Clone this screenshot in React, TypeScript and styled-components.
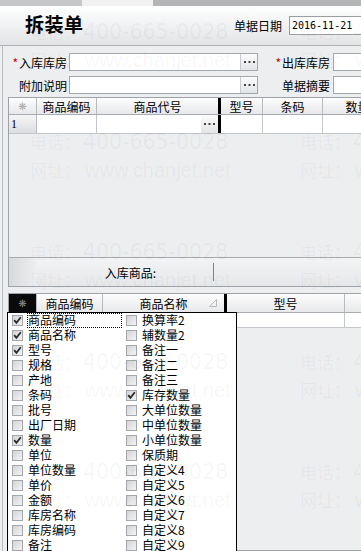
import React from 'react';
import styled, { createGlobalStyle } from 'styled-components';

const Global = createGlobalStyle`
  html, body { margin: 0; padding: 0; background: #eceef0; }
  body {
    font-family: "Noto Sans CJK SC", "Noto Sans", sans-serif;
    font-size: 12px;
    color: #000;
    overflow: hidden;
  }
  * { box-sizing: border-box; }
`;

const Page = styled.div`
  position: relative;
  width: 361px;
  height: 551px;
  overflow: hidden;
  background: #eceef0;
  display: flex;
  flex-direction: column;
`;

const TabStrip = styled.div`
  display: flex;
  height: 6px;
  flex-shrink: 0;
`;

const TabSeg = styled.div<{ $w?: number; $c: string }>`
  width: ${(p) => (p.$w ? `${p.$w}px` : 'auto')};
  flex: ${(p) => (p.$w ? 'none' : '1')};
  background: ${(p) => p.$c};
`;

const Header = styled.header`
  height: 40px;
  flex-shrink: 0;
  border-bottom: 1px solid #aeb1b5;
  background: linear-gradient(#ffffff, #e2e4e6);
  display: flex;
  align-items: center;
  padding-left: 25px;
`;

const Title = styled.h1`
  margin: -4px 0 0 0;
  flex: 1;
  font-size: 19px;
  font-weight: 700;
  letter-spacing: 0.5px;
  line-height: 1;
`;

const DateLabel = styled.span`
  font-size: 12px;
  margin-right: 7px;
  white-space: nowrap;
`;

const DateBox = styled.div`
  width: 72px;
  height: 19px;
  flex-shrink: 0;
  margin-top: -1px;
  background: #fff;
  border: 1px solid #9a9ea3;
  border-right: none;
  font-family: "DejaVu Sans Mono", monospace;
  font-size: 10px;
  line-height: 17px;
  padding-left: 2px;
  white-space: nowrap;
`;

const Main = styled.div`
  flex: 1;
  margin-left: 2px;
  border-left: 1px solid #b9bcc0;
  display: flex;
  flex-direction: column;
  min-height: 0;
`;

const Fields = styled.div`
  display: flex;
  flex-direction: column;
  gap: 5px;
  padding-top: 7px;
`;

const FieldRow = styled.div`
  display: flex;
  height: 18px;
`;

const Label = styled.label<{ $w: number; $pr: number }>`
  width: ${(p) => p.$w}px;
  flex-shrink: 0;
  display: flex;
  align-items: center;
  justify-content: flex-end;
  padding-right: ${(p) => p.$pr}px;
  font-size: 12px;
  white-space: nowrap;
`;

const Req = styled.span`
  color: #d40000;
  margin-right: 1px;
`;

const Combo = styled.div<{ $w: number }>`
  width: ${(p) => p.$w}px;
  flex-shrink: 0;
  display: flex;
  background: #fff;
  border: 1px solid #a3a8ae;
`;

const ComboText = styled.div`
  flex: 1;
`;

const DotsBtn = styled.div<{ $border?: boolean }>`
  width: 17px;
  flex-shrink: 0;
  display: flex;
  align-items: center;
  justify-content: center;
  background: linear-gradient(#fbfbfb, #e3e4e6);
  border-left: ${(p) => (p.$border ? '1px solid #c9ccd0' : 'none')};
`;

const Dots = () => (
  <svg width="11" height="2" viewBox="0 0 11 2">
    <rect x="0" y="0" width="2" height="2" fill="#444" />
    <rect x="4.5" y="0" width="2" height="2" fill="#444" />
    <rect x="9" y="0" width="2" height="2" fill="#444" />
  </svg>
);

const Grid = styled.div<{ $h?: number; $mt: number }>`
  margin-left: 5px;
  margin-top: ${(p) => p.$mt}px;
  ${(p) => (p.$h ? `height: ${p.$h}px;` : 'flex: 1;')}
  flex-shrink: 0;
  border: 1px solid #9da2a8;
  border-right: none;
  display: flex;
  flex-direction: column;
  background: #eceef0;
  overflow: hidden;
`;

const HeadRow = styled.div<{ $h: number }>`
  display: flex;
  height: ${(p) => p.$h}px;
  flex-shrink: 0;
  border-bottom: 1px solid #a9adb2;
`;

const HCell = styled.div<{ $w: number; $frozen?: boolean; $dark?: boolean }>`
  width: ${(p) => p.$w}px;
  flex-shrink: 0;
  display: flex;
  align-items: center;
  justify-content: center;
  position: relative;
  font-size: 12px;
  white-space: nowrap;
  background: ${(p) => (p.$dark ? '#0a0a0a' : 'linear-gradient(#fdfdfd, #e7e8ea)')};
  border-right: ${(p) => (p.$frozen ? '3px solid #000' : '1px solid #b8bcc1')};
`;

const Star = styled.span<{ $c: string }>`
  font-family: "DejaVu Sans", sans-serif;
  font-size: 10px;
  color: ${(p) => p.$c};
`;

const SortMark = styled.svg`
  position: absolute;
  right: 7px;
  top: 50%;
  margin-top: -4px;
`;

const DataRow = styled.div<{ $h: number }>`
  display: flex;
  height: ${(p) => p.$h}px;
  flex-shrink: 0;
  border-bottom: 1px solid #c3c7cc;
`;

const DCell = styled.div<{ $w: number; $frozen?: boolean }>`
  width: ${(p) => p.$w}px;
  flex-shrink: 0;
  display: flex;
  justify-content: flex-end;
  background: #fff;
  border-right: ${(p) => (p.$frozen ? '3px solid #000' : '1px solid #c3c7cc')};
`;

const RowHead = styled.div<{ $w: number }>`
  width: ${(p) => p.$w}px;
  flex-shrink: 0;
  background: linear-gradient(#f6f6f6, #dcdde0);
  border-right: 1px solid #b8bcc1;
  font-family: "Liberation Serif", serif;
  font-size: 12px;
  line-height: 18px;
  padding-left: 2px;
`;

const GridBody = styled.div`
  flex: 1;
`;

const Footer = styled.div`
  height: 29px;
  flex-shrink: 0;
  display: flex;
  align-items: center;
  border-top: 1px solid #a7abb0;
  background: linear-gradient(#f3f4f5, #e6e7e9);
`;

const FootHead = styled.div`
  width: 28px;
  align-self: stretch;
  flex-shrink: 0;
  background: linear-gradient(90deg, #d8d9db, #eeeff0);
`;

const FootLabel = styled.div`
  width: 177px;
  height: 18px;
  flex-shrink: 0;
  display: flex;
  align-items: center;
  justify-content: flex-end;
  padding-right: 57px;
  border-right: 1px solid #808080;
  font-size: 12px;
  white-space: nowrap;
`;

const Popup = styled.div`
  position: absolute;
  left: 7px;
  top: 312px;
  width: 230px;
  height: 250px;
  background: #fff;
  border: 1px solid #000;
  display: grid;
  grid-template-columns: 114px 1fr;
  grid-auto-flow: column;
  grid-template-rows: repeat(16, 15px);
  z-index: 5;
`;

const Item = styled.div`
  display: flex;
  align-items: center;
  padding-left: 4px;
  height: 15px;
`;

const Box = styled.span`
  width: 11px;
  height: 11px;
  flex-shrink: 0;
  border: 1px solid #a3a6aa;
  background: linear-gradient(135deg, #d3d4d6, #f3f3f4);
  display: flex;
  align-items: center;
  justify-content: center;
`;

const ItemText = styled.span<{ $focus?: boolean }>`
  flex: 1;
  height: 15px;
  margin-left: 4px;
  padding-left: 1px;
  font-size: 12px;
  line-height: 14px;
  white-space: nowrap;
  outline: ${(p) => (p.$focus ? '1px dotted #000' : 'none')};
  outline-offset: -1px;
`;

const Check = () => (
  <svg width="9" height="9" viewBox="0 0 9 9">
    <path d="M1.2 4.2 L3.4 6.8 L7.8 1.2" fill="none" stroke="#2a2a2a" strokeWidth="1.8" />
  </svg>
);

const Watermark = styled.div`
  position: absolute;
  inset: 0;
  pointer-events: none;
  z-index: 10;
  display: grid;
  grid-template-columns: 270px 270px;
  grid-auto-rows: 110px;
  padding: 18px 0 0 30px;
  color: rgba(0, 0, 0, 0.045);
`;

const WMBlock = styled.div`
  display: flex;
  flex-direction: column;
`;

const WMLine = styled.div`
  height: 28px;
  line-height: 28px;
  white-space: nowrap;
  display: flex;
  align-items: center;
`;

const WMCjk = styled.span`
  font-family: "Noto Sans CJK SC", sans-serif;
  font-size: 17px;
`;

const WMNum = styled.span`
  font-family: "DejaVu Sans", sans-serif;
  font-size: 20.5px;
  margin-left: 2px;
`;

const WMUrl = styled.span`
  font-family: "Liberation Sans", sans-serif;
  font-size: 20px;
  margin-left: 4px;
`;

const leftItems: [string, boolean][] = [
  ['商品编码', true], ['商品名称', true], ['型号', true], ['规格', false],
  ['产地', false], ['条码', false], ['批号', false], ['出厂日期', false],
  ['数量', true], ['单位', false], ['单位数量', false], ['单价', false],
  ['金额', false], ['库房名称', false], ['库房编码', false], ['备注', false],
];
const rightItems: [string, boolean][] = [
  ['换算率2', false], ['辅数量2', false], ['备注一', false], ['备注二', false],
  ['备注三', false], ['库存数量', true], ['大单位数量', false], ['中单位数量', false],
  ['小单位数量', false], ['保质期', false], ['自定义4', false], ['自定义5', false],
  ['自定义6', false], ['自定义7', false], ['自定义8', false], ['自定义9', false],
];

export default function App() {
  const blocks = Array.from({ length: 10 });
  return (
    <>
      <Global />
      <Page>
        <TabStrip>
          <TabSeg $w={82} $c="#c6c7c8" />
          <TabSeg $w={71} $c="#f1f1f1" />
          <TabSeg $c="#b4b5b7" />
        </TabStrip>
        <Header>
          <Title>拆装单</Title>
          <DateLabel>单据日期</DateLabel>
          <DateBox>2016-11-21</DateBox>
        </Header>
        <Main>
          <Fields>
            <FieldRow>
              <Label $w={66} $pr={2}><Req>*</Req>入库库房</Label>
              <Combo $w={189}>
                <ComboText />
                <DotsBtn $border><Dots /></DotsBtn>
              </Combo>
              <Label $w={75} $pr={3}><Req>*</Req>出库库房</Label>
              <Combo $w={60}><ComboText /></Combo>
            </FieldRow>
            <FieldRow>
              <Label $w={66} $pr={2}>附加说明</Label>
              <Combo $w={189}>
                <ComboText />
                <DotsBtn $border><Dots /></DotsBtn>
              </Combo>
              <Label $w={75} $pr={3}>单据摘要</Label>
              <Combo $w={60}><ComboText /></Combo>
            </FieldRow>
          </Fields>

          <Grid $h={190} $mt={3}>
            <HeadRow $h={17}>
              <HCell $w={28}><Star $c="#a8a8a8">❋</Star></HCell>
              <HCell $w={60}>商品编码</HCell>
              <HCell $w={124} $frozen>商品代号</HCell>
              <HCell $w={42}>型号</HCell>
              <HCell $w={60}>条码</HCell>
              <HCell $w={70}>数量</HCell>
            </HeadRow>
            <DataRow $h={19}>
              <RowHead $w={28}>1</RowHead>
              <DCell $w={60} />
              <DCell $w={124} $frozen>
                <DotsBtn><Dots /></DotsBtn>
              </DCell>
              <DCell $w={42} />
              <DCell $w={60} />
              <DCell $w={70} />
            </DataRow>
            <GridBody />
            <Footer>
              <FootHead />
              <FootLabel>入库商品:</FootLabel>
            </Footer>
          </Grid>

          <Grid $mt={6}>
            <HeadRow $h={19}>
              <HCell $w={28} $dark><Star $c="#8a8a8a">❋</Star></HCell>
              <HCell $w={66}>商品编码</HCell>
              <HCell $w={124} $frozen>
                商品名称
                <SortMark width="8" height="8" viewBox="0 0 8 8">
                  <path d="M0.5 7.5 L7.5 7.5 L7.5 0.5 Z" fill="none" stroke="#b9b9b9" strokeWidth="1" />
                </SortMark>
              </HCell>
              <HCell $w={118}>型号</HCell>
              <HCell $w={60} />
            </HeadRow>
            <DataRow $h={15}>
              <DCell $w={28} />
              <DCell $w={66} />
              <DCell $w={124} $frozen />
              <DCell $w={118} />
              <DCell $w={60} />
            </DataRow>
            <GridBody />
          </Grid>
        </Main>

        <Popup>
          {leftItems.map(([t, c], i) => (
            <Item key={`l${i}`}>
              <Box>{c && <Check />}</Box>
              <ItemText $focus={i === 0}>{t}</ItemText>
            </Item>
          ))}
          {rightItems.map(([t, c], i) => (
            <Item key={`r${i}`}>
              <Box>{c && <Check />}</Box>
              <ItemText>{t}</ItemText>
            </Item>
          ))}
        </Popup>

        <Watermark>
          {blocks.map((_, i) => (
            <WMBlock key={i}>
              <WMLine>
                <WMCjk>电话：</WMCjk>
                <WMNum>400-665-0028</WMNum>
              </WMLine>
              <WMLine>
                <WMCjk>网址：</WMCjk>
                <WMUrl>www.chanjet.net</WMUrl>
              </WMLine>
            </WMBlock>
          ))}
        </Watermark>
      </Page>
    </>
  );
}
